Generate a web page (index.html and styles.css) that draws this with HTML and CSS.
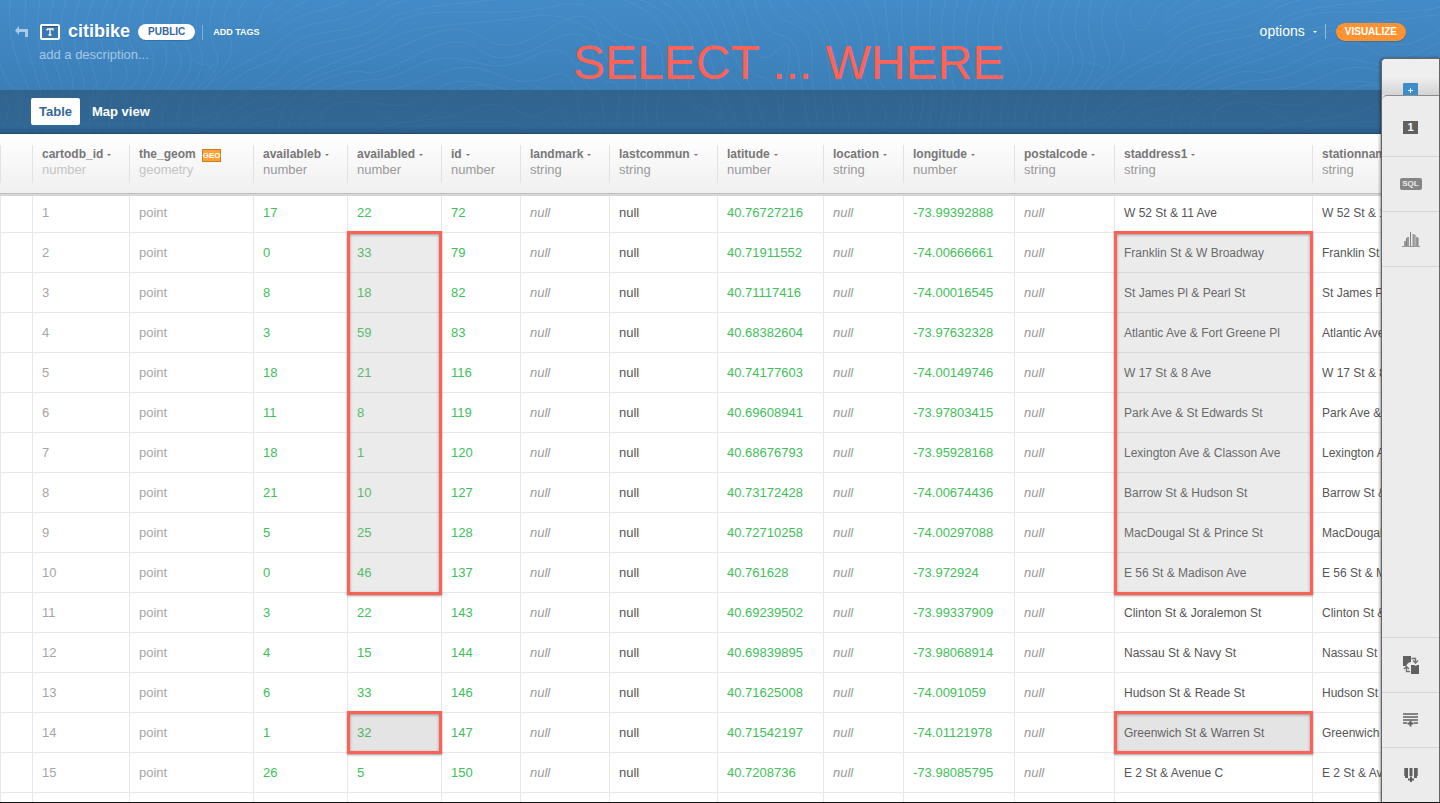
FILE: index.html
```html
<!DOCTYPE html>
<html lang="en">
<head>
<meta charset="utf-8">
<title>citibike</title>
<link rel="stylesheet" href="styles.css">
</head>
<body>
<header class="masthead">
  <svg class="contours" aria-hidden="true">
    <defs>
      <pattern id="topo" x="274" y="0" width="892" height="134" patternUnits="userSpaceOnUse">
        <g fill="none" stroke="#fff" stroke-width="1">
          <path d="M0 12Q14-2 22-6M0 22Q18 6 44-4M0 34Q20 16 40 12T84-4M0 46Q18 26 50 22T120-4M0 62Q16 36 54 32T104 14T160-4M0 74Q18 46 60 40T112 22T180 4T260-4M0 86Q24 58 62 52T116 28T190 12T280 6T330 18T372 40T386 90T400 134"/>
          <path d="M0 98Q24 76 66 60T122 36T186 24T260 16T310 26T356 48T372 96T388 134M0 110Q10 88 44 76T92 60T146 38T210 38T276 28T326 38T350 64T360 100T374 134M4 134Q4 100 40 84T90 72T144 54T206 50T270 44T318 52T336 82T344 112T360 134M14 134Q12 108 44 94T96 80T142 66T200 62T260 56T302 66T322 94T330 118T344 134"/>
          <path d="M24 134Q24 112 50 100T100 90T158 76T222 74T276 76T304 104T312 122T328 134M36 134Q34 118 54 108T108 104T160 92T220 86T262 88T290 114T312 134M48 134Q44 106 66 102T112 116T170 102T230 98T270 112T296 134M86 134Q120 122 150 120T200 108T250 114T280 134M120 134Q150 124 190 122T240 124T260 134"/>
          <path d="M346-2Q380 10 390 30T398 70T420 106T430 134M362-2Q396 10 404 32T414 80T436 110T442 134M382-2Q412 12 418 40T436 88T454 134M402-2Q426 18 432 44T446 84T466 134M420-2Q440 18 444 42T462 80T478 134M438-2Q450 20 456 42T474 82T492 134"/>
          <path d="M452-2Q462 20 468 48T490 78T506 134M466-2Q474 20 480 44T504 50T512 84T520 134M480-2Q486 30 504 34T524 56T530 100T536 134M494-2Q500 18 520 24T538 54T546 134M510-2Q518 12 534 20T554 60T560 134M530-2Q548 12 556 40T570 90T574 134"/>
          <path d="M552-2Q572 20 574 50T588 96T590 134M570-2Q588 16 588 52T604 100T604 134M590-2Q604 22 602 54T618 94T618 134M610-2Q614 30 616 52T632 90T630 134M628-2Q626 30 632 50T646 86T642 134M644-2Q640 32 648 56T658 88T654 134M658-2Q652 34 660 60T670 90T664 134"/>
          <path d="M672-2Q662 32 672 60T680 90T674 134M684-2Q674 34 684 58T690 92T684 134M698-2Q686 30 696 60T700 90T696 134M712-2Q698 30 708 60T714 86T706 134M726-2Q712 34 724 56T722 90T716 134M740-2Q724 30 738 54T738 88T728 134M752-2Q740 30 752 52T752 84T740 134"/>
          <path d="M766-2Q754 24 766 44T764 84T752 134M780-2Q768 26 780 42T774 86T764 134M794-2Q780 28 794 46T784 90T774 134M806-2Q796 28 806 48T794 90T784 134M818-2Q810 24 818 46T808 88T798 134M834-2Q822 24 832 46T824 80T812 134"/>
          <path d="M850-2Q836 18 846 34T842 66T822 90Q826 80 892 48M866-2Q850 12 860 26T882 8L892 2M892 60Q850 74 836 96T810 122Q850 112 892 72M892 84Q856 90 840 112T808 134M892 96Q864 98 844 120L828 134M892 108Q868 108 844 134M892 120Q872 120 860 134"/>
          <path d="M814 62q6 4 10 2q4 4 8 0m-2 2l-4 4"/>
        </g>
      </pattern>
    </defs>
    <rect width="100%" height="100%" fill="url(#topo)"/>
  </svg>
  <div class="titlebar">
    <div class="identity">
      <a class="back" href="#" aria-label="Back">
        <svg width="14" height="13" viewBox="0 0 14 13"><path d="M4 0v3h9v8h-3V6H4v3L0 4.500z" fill="#a9c9e6"/></svg>
      </a>
      <div class="about">
        <div class="name-row">
          <svg class="kind" width="20" height="16" viewBox="0 0 20 16" aria-hidden="true"><rect x="1" y="1" width="18" height="14" rx="1" fill="#3a78ae" stroke="#fff" stroke-width="2"/><path d="M2 2.500h16" stroke="#2a5580"/><path d="M7 5h6v1.500M7 6.500V5M10 5v6M8.500 11h3" fill="none" stroke="#fff" stroke-width="1.300"/></svg>
          <h1>citibike</h1>
          <button class="pill privacy" type="button">PUBLIC</button>
          <button class="tags" type="button">ADD TAGS</button>
        </div>
        <a class="description" href="#">add a description...</a>
      </div>
    </div>
    <div class="actions">
      <button class="options" type="button">options<i class="caret"></i></button>
      <button class="pill visualize" type="button">VISUALIZE</button>
    </div>
  </div>
  <nav class="tabs">
    <a class="tab current" href="#">Table</a>
    <a class="tab" href="#">Map view</a>
  </nav>
  <p class="callout">SELECT ... WHERE</p>
</header>

<main class="sheet">
<table>
  <colgroup><col class="w32"><col class="w97"><col class="w124"><col class="w94"><col class="w94"><col class="w79"><col class="w89"><col class="w108"><col class="w106"><col class="w80"><col class="w111"><col class="w100"><col class="w198"><col></colgroup>
  <thead>
    <tr>
      <th><div class="head"></div></th>
      <th><div class="head locked">cartodb_id<i class="caret"></i><span>number</span></div></th>
      <th><div class="head locked">the_geom<b class="geo">GEO</b><span>geometry</span></div></th>
      <th><div class="head">availableb<i class="caret"></i><span>number</span></div></th>
      <th><div class="head">availabled<i class="caret"></i><span>number</span></div></th>
      <th><div class="head">id<i class="caret"></i><span>number</span></div></th>
      <th><div class="head">landmark<i class="caret"></i><span>string</span></div></th>
      <th><div class="head">lastcommun<i class="caret"></i><span>string</span></div></th>
      <th><div class="head">latitude<i class="caret"></i><span>number</span></div></th>
      <th><div class="head">location<i class="caret"></i><span>string</span></div></th>
      <th><div class="head">longitude<i class="caret"></i><span>number</span></div></th>
      <th><div class="head">postalcode<i class="caret"></i><span>string</span></div></th>
      <th><div class="head">staddress1<i class="caret"></i><span>string</span></div></th>
      <th><div class="head">stationname<i class="caret"></i><span>string</span></div></th>
    </tr>
  </thead>
  <tbody>
    <tr><td></td><td class="dim">1</td><td class="dim">point</td><td class="num">17</td><td class="num">22</td><td class="num">72</td><td class="nil">null</td><td>null</td><td class="num">40.76727216</td><td class="nil">null</td><td class="num">-73.99392888</td><td class="nil">null</td><td class="addr">W 52 St &amp; 11 Ave</td><td class="addr">W 52 St &amp; 11 Ave</td></tr>
    <tr><td></td><td class="dim">2</td><td class="dim">point</td><td class="num">0</td><td class="num">33<i class="mark tall"></i></td><td class="num">79</td><td class="nil">null</td><td>null</td><td class="num">40.71911552</td><td class="nil">null</td><td class="num">-74.00666661</td><td class="nil">null</td><td class="addr">Franklin St &amp; W Broadway<i class="mark tall"></i></td><td class="addr">Franklin St &amp; W Broadway</td></tr>
    <tr><td></td><td class="dim">3</td><td class="dim">point</td><td class="num">8</td><td class="num">18</td><td class="num">82</td><td class="nil">null</td><td>null</td><td class="num">40.71117416</td><td class="nil">null</td><td class="num">-74.00016545</td><td class="nil">null</td><td class="addr">St James Pl &amp; Pearl St</td><td class="addr">St James Pl &amp; Pearl St</td></tr>
    <tr><td></td><td class="dim">4</td><td class="dim">point</td><td class="num">3</td><td class="num">59</td><td class="num">83</td><td class="nil">null</td><td>null</td><td class="num">40.68382604</td><td class="nil">null</td><td class="num">-73.97632328</td><td class="nil">null</td><td class="addr">Atlantic Ave &amp; Fort Greene Pl</td><td class="addr">Atlantic Ave &amp; Fort Greene Pl</td></tr>
    <tr><td></td><td class="dim">5</td><td class="dim">point</td><td class="num">18</td><td class="num">21</td><td class="num">116</td><td class="nil">null</td><td>null</td><td class="num">40.74177603</td><td class="nil">null</td><td class="num">-74.00149746</td><td class="nil">null</td><td class="addr">W 17 St &amp; 8 Ave</td><td class="addr">W 17 St &amp; 8 Ave</td></tr>
    <tr><td></td><td class="dim">6</td><td class="dim">point</td><td class="num">11</td><td class="num">8</td><td class="num">119</td><td class="nil">null</td><td>null</td><td class="num">40.69608941</td><td class="nil">null</td><td class="num">-73.97803415</td><td class="nil">null</td><td class="addr">Park Ave &amp; St Edwards St</td><td class="addr">Park Ave &amp; St Edwards St</td></tr>
    <tr><td></td><td class="dim">7</td><td class="dim">point</td><td class="num">18</td><td class="num">1</td><td class="num">120</td><td class="nil">null</td><td>null</td><td class="num">40.68676793</td><td class="nil">null</td><td class="num">-73.95928168</td><td class="nil">null</td><td class="addr">Lexington Ave &amp; Classon Ave</td><td class="addr">Lexington Ave &amp; Classon Ave</td></tr>
    <tr><td></td><td class="dim">8</td><td class="dim">point</td><td class="num">21</td><td class="num">10</td><td class="num">127</td><td class="nil">null</td><td>null</td><td class="num">40.73172428</td><td class="nil">null</td><td class="num">-74.00674436</td><td class="nil">null</td><td class="addr">Barrow St &amp; Hudson St</td><td class="addr">Barrow St &amp; Hudson St</td></tr>
    <tr><td></td><td class="dim">9</td><td class="dim">point</td><td class="num">5</td><td class="num">25</td><td class="num">128</td><td class="nil">null</td><td>null</td><td class="num">40.72710258</td><td class="nil">null</td><td class="num">-74.00297088</td><td class="nil">null</td><td class="addr">MacDougal St &amp; Prince St</td><td class="addr">MacDougal St &amp; Prince St</td></tr>
    <tr><td></td><td class="dim">10</td><td class="dim">point</td><td class="num">0</td><td class="num">46</td><td class="num">137</td><td class="nil">null</td><td>null</td><td class="num">40.761628</td><td class="nil">null</td><td class="num">-73.972924</td><td class="nil">null</td><td class="addr">E 56 St &amp; Madison Ave</td><td class="addr">E 56 St &amp; Madison Ave</td></tr>
    <tr><td></td><td class="dim">11</td><td class="dim">point</td><td class="num">3</td><td class="num">22</td><td class="num">143</td><td class="nil">null</td><td>null</td><td class="num">40.69239502</td><td class="nil">null</td><td class="num">-73.99337909</td><td class="nil">null</td><td class="addr">Clinton St &amp; Joralemon St</td><td class="addr">Clinton St &amp; Joralemon St</td></tr>
    <tr><td></td><td class="dim">12</td><td class="dim">point</td><td class="num">4</td><td class="num">15</td><td class="num">144</td><td class="nil">null</td><td>null</td><td class="num">40.69839895</td><td class="nil">null</td><td class="num">-73.98068914</td><td class="nil">null</td><td class="addr">Nassau St &amp; Navy St</td><td class="addr">Nassau St &amp; Navy St</td></tr>
    <tr><td></td><td class="dim">13</td><td class="dim">point</td><td class="num">6</td><td class="num">33</td><td class="num">146</td><td class="nil">null</td><td>null</td><td class="num">40.71625008</td><td class="nil">null</td><td class="num">-74.0091059</td><td class="nil">null</td><td class="addr">Hudson St &amp; Reade St</td><td class="addr">Hudson St &amp; Reade St</td></tr>
    <tr><td></td><td class="dim">14</td><td class="dim">point</td><td class="num">1</td><td class="num">32<i class="mark"></i></td><td class="num">147</td><td class="nil">null</td><td>null</td><td class="num">40.71542197</td><td class="nil">null</td><td class="num">-74.01121978</td><td class="nil">null</td><td class="addr">Greenwich St &amp; Warren St<i class="mark"></i></td><td class="addr">Greenwich St &amp; Warren St</td></tr>
    <tr><td></td><td class="dim">15</td><td class="dim">point</td><td class="num">26</td><td class="num">5</td><td class="num">150</td><td class="nil">null</td><td>null</td><td class="num">40.7208736</td><td class="nil">null</td><td class="num">-73.98085795</td><td class="nil">null</td><td class="addr">E 2 St &amp; Avenue C</td><td class="addr">E 2 St &amp; Avenue C</td></tr>
    <tr><td></td><td></td><td></td><td></td><td></td><td></td><td></td><td></td><td></td><td></td><td></td><td></td><td></td><td></td></tr>
  </tbody>
</table>
</main>

<aside class="dock">
  <button class="add-layer" type="button" aria-label="Add layer">
    <svg width="15" height="12" viewBox="0 0 15 12"><rect width="15" height="14" rx="1" fill="#3f8ccb"/><path d="M7.500 5v5M5 7.500h5" stroke="#e8f2fa"/></svg>
  </button>
  <div class="layer">
    <button class="tool first" type="button" aria-label="Layer 1"><span class="index">1</span></button>
    <button class="tool" type="button"><span class="sql">SQL</span></button>
    <button class="tool" type="button" aria-label="Filters">
      <svg width="18" height="16" viewBox="0 0 18 16"><path d="M0 15.500h18" stroke="#999"/><path d="M3 15v-5M6 15V6M11.500 15V3M15 15V6" stroke="#9a9a9a" stroke-width="2"/><path d="M4.500 15V7M8.500 15V1M13 15V4M16 15v-8" stroke="#808080"/></svg>
    </button>
    <div class="gap"></div>
    <button class="tool" type="button" aria-label="Merge tables">
      <svg width="18" height="20" viewBox="0 0 18 20"><path d="M1 1h8v6L6 8l-2 3H1zM9 10h3l2 1 1-1h2v9H9z" fill="#606060"/><path d="M9.500 3.500h4V7M11 5.500L13.500 8 16 5.500M8 16.500H4.500V12M2 14l2.500-2.500L7 14" fill="none" stroke="#707070" stroke-width="1.300"/></svg>
    </button>
    <button class="tool" type="button" aria-label="Add row">
      <svg width="15" height="14" viewBox="0 0 15 14"><path d="M0 1h15M0 4h15M0 7h15M0 10h4M11 10h4" stroke="#606060" stroke-width="1.600"/><path d="M7.500 8v5.500M4.500 10.500h6" fill="none" stroke="#606060" stroke-width="2"/></svg>
    </button>
    <button class="tool" type="button" aria-label="Add column">
      <svg width="14" height="16" viewBox="0 0 14 16"><path d="M2.500 1v10M11.500 1v10M7 1v8" stroke="#606060" stroke-width="3"/><path d="M.5 1v8M13.500 1v8" stroke="#888"/><path d="M7 9.500V15M4 12.500h6" fill="none" stroke="#606060" stroke-width="2"/></svg>
    </button>
  </div>
</aside>
</body>
</html>
```
FILE: styles.css
```css
* { box-sizing: border-box; }
body {
  margin: 0;
  height: 100vh;
  display: flex;
  flex-direction: column;
  position: relative;
  overflow: hidden;
  border-bottom: 1px solid #111;
  background: #fff;
  font: 13px/16px "Liberation Sans", Arial, Helvetica, sans-serif;
  color: #555;
}
button { margin: 0; padding: 0; border: 0; background: none; font: inherit; color: inherit; }
a { color: inherit; text-decoration: none; }

/* Header */
.masthead { position: relative; background: linear-gradient(#438bc8, #3c7fb8 90px); color: #fff; }
.contours { position: absolute; inset: 0; width: 100%; height: 100%; opacity: .06; }
.titlebar { position: relative; display: flex; justify-content: space-between; height: 90px; padding: 20px 34px 0 15px; }
.identity { display: flex; gap: 10px; }
.back { padding-top: 6px; }
.back svg, .kind, .tool svg, .add-layer svg { display: block; }
.name-row { display: flex; align-items: center; height: 22px; }
h1 { margin: 0 8px; font-size: 18px; line-height: 20px; text-shadow: 0 1px 1px #2a62918c; }
.kind { margin: 2px 0 0 1px; }
.pill { height: 16px; padding: 0 10px; border-radius: 9px; font-size: 10px; font-weight: bold; line-height: 16px; }
.privacy { margin-top: 2px; background: #fff; color: #33689a; box-shadow: 0 1px 1px #2a62918c; }
.tags { margin: 2px 0 0 7px; padding-left: 10px; border-left: 1px solid #7db0da; font-size: 9px; font-weight: bold; line-height: 15px; }
.description { display: block; margin-top: 5px; color: #a5c8e6; }
.actions { display: flex; align-items: flex-start; }
.options { display: flex; align-items: center; margin: 4px 10px 0 0; padding-right: 8px; border-right: 1px solid #8fbbdf; font-size: 14px; line-height: 15px; }
.options .caret { margin-left: 8px; }
.visualize { height: 18px; margin-top: 3px; padding: 0 9px; background: #ff9331; line-height: 18px; box-shadow: 0 1px 1px #2a62918c; }
.tabs {
  position: relative;
  display: flex;
  gap: 4px;
  height: 44px;
  padding: 7px 31px;
  border-top: 1px solid #2e658f;
  border-bottom: 1px solid #234a6b;
  background: linear-gradient(#27486280, #26507480 84%, #1a406699);
  font-weight: bold;
}
.tab { height: 27px; padding: 0 8px; border-radius: 2px; line-height: 27px; }
.current { background: #fff; color: #33689a; }
.callout { position: absolute; left: 573px; top: 37px; margin: 0; color: #ff6257; font-size: 48px; line-height: 52px; white-space: nowrap; }
.caret { display: inline-block; width: 0; border: 2px solid transparent; border-top-color: currentColor; border-bottom: 0; }

/* Data grid */
.sheet { flex: 1; min-height: 0; overflow: hidden; }
table { width: 100%; table-layout: fixed; border-collapse: separate; border-spacing: 0; }
.w32 { width: 32px; } .w97 { width: 97px; } .w124 { width: 124px; } .w94 { width: 94px; }
.w79 { width: 79px; } .w89 { width: 89px; } .w108 { width: 108px; } .w106 { width: 106px; }
.w80 { width: 80px; } .w111 { width: 111px; } .w100 { width: 100px; } .w198 { width: 198px; }
th {
  position: relative;
  z-index: 1;
  height: 59px;
  padding: 11px 0 10px;
  background: linear-gradient(#fff, #f0f0f0);
  box-shadow: 0 1px 0 #bfbfbf, 0 3px 0 #d6d6d6;
  text-align: left;
  font-size: 12px;
  vertical-align: top;
}
.head { height: 38px; padding-left: 9px; border-left: 1px solid #e2e2e2; color: #777; line-height: 18px; white-space: nowrap; }
.head span { display: block; color: #999; font-size: 13px; font-weight: normal; line-height: 14px; }
.head .caret { margin-left: 4px; vertical-align: 2px; }
.locked span { color: #c4c4c4; }
.geo { display: inline-block; margin-left: 6px; width: 19px; height: 13px; border: 1px solid #c97c22; background: #ffa134; color: #fff; font-size: 8px; line-height: 11px; text-align: center; vertical-align: top; margin-top: 4px; }
.geo + span { margin-top: 0; }
td { position: relative; height: 40px; padding: 0 0 0 9px; border-left: 1px solid #e8e8e8; border-bottom: 1px solid #e8e8e8; white-space: nowrap; }
.num { color: #41bf59; }
.dim { color: #a5a5a5; }
.nil { color: #999; font-style: italic; }
.addr { font-size: 12px; }
.mark {
  position: absolute;
  z-index: 1;
  top: -2px;
  left: -1px;
  right: -1px;
  height: 43px;
  border: 3px solid #fc6156;
  background: #9090903d;
  box-shadow: 0 1px 2px #00000066, inset 0 1px 3px #00000059;
}
.tall { height: 364px; background: #aaaaaa3d; }

/* Tool dock */
.dock {
  position: absolute;
  z-index: 2;
  right: 0;
  top: 58px;
  bottom: 0;
  width: 59px;
  display: flex;
  flex-direction: column;
  border: 1px solid #666;
  border-bottom: 0;
  border-radius: 5px 0 0 0;
  background: #ececec;
  box-shadow: -1px 0 3px #00000066;
}
.add-layer { display: flex; justify-content: center; align-items: flex-end; height: 36px; border-radius: 4px 0 0 0; background: linear-gradient(#efefef 50%, #d4d4d4); }
.layer { flex: 1; display: flex; flex-direction: column; border-top: 1px solid #8c8c8c; border-radius: 5px 0 0 0; background: #ececec; }
.tool { display: flex; align-items: center; justify-content: center; height: 55px; border-bottom: 1px solid #d6d6d6; }
.tool.first { height: 61px; padding-top: 3px; }
.tool:last-child { height: 54px; border-bottom: 0; }
.gap { flex: 1; border-bottom: 1px solid #d6d6d6; }
.index { width: 15px; height: 13px; background: #606060; color: #fff; font-size: 11px; font-weight: bold; line-height: 13px; }
.sql { width: 22px; height: 12px; border-radius: 2px; background: #858585; color: #eee; font-size: 8px; font-weight: bold; line-height: 12px; }
```
